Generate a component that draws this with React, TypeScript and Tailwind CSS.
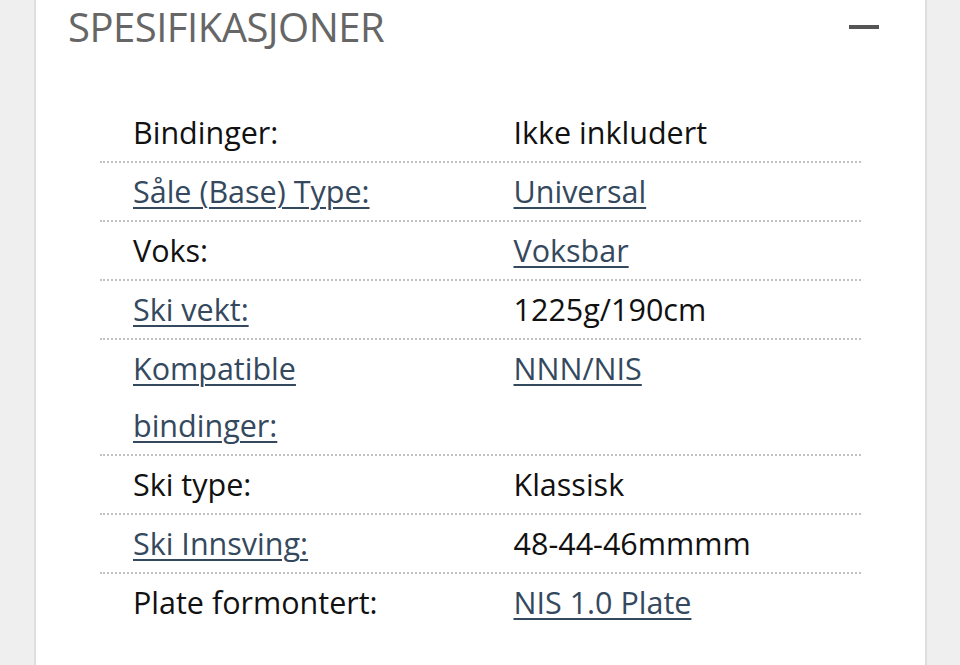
const rows: { label: string; value: string; labelLink?: boolean; valueLink?: boolean }[] = [
  { label: "Bindinger:", value: "Ikke inkludert" },
  { label: "Såle (Base) Type:", value: "Universal", labelLink: true, valueLink: true },
  { label: "Voks:", value: "Voksbar", valueLink: true },
  { label: "Ski vekt:", value: "1225g/190cm", labelLink: true },
  { label: "Kompatible bindinger:", value: "NNN/NIS", labelLink: true, valueLink: true },
  { label: "Ski type:", value: "Klassisk" },
  { label: "Ski Innsving:", value: "48-44-46mmmm", labelLink: true },
  { label: "Plate formontert:", value: "NIS 1.0 Plate", valueLink: true },
]

const Cell = ({ text, link }: { text: string; link?: boolean }) => (
  <div className="w-1/2 pl-[33px] pr-[44px]">
    {link ? (
      <a href="#" className="text-[#34495e] underline decoration-[2px] underline-offset-[4px]">
        {text}
      </a>
    ) : (
      <span className="text-[#111]">{text}</span>
    )}
  </div>
)

export default function App() {
  return (
    <div className="min-h-screen bg-[#efefef] flex" style={{ fontFamily: '"Open Sans", sans-serif' }}>
      <div className="ml-[34px] w-[893px] min-h-screen bg-white border-x-2 border-[#dedede] px-[32px]">
        {/* header */}
        <div className="flex items-center justify-between h-[56px]">
          <h2 className="text-[40px] leading-none text-[#666] tracking-[-0.5px] -mt-[2px]">SPESIFIKASJONER</h2>
          <span className="block w-[30px] h-[4px] bg-[#555] mr-[14px] -mt-[3px]" />
        </div>

        {/* spec table */}
        <div className="mt-[48px] mx-[32px] text-[30.5px] leading-[57px]">
          {rows.map((r, i) => (
            <div
              key={r.label}
              className={`flex ${i < rows.length - 1 ? "border-b-2 border-dotted border-[#c2c2c2]" : ""}`}
            >
              <Cell text={r.label} link={r.labelLink} />
              <Cell text={r.value} link={r.valueLink} />
            </div>
          ))}
        </div>
      </div>
    </div>
  )
}
